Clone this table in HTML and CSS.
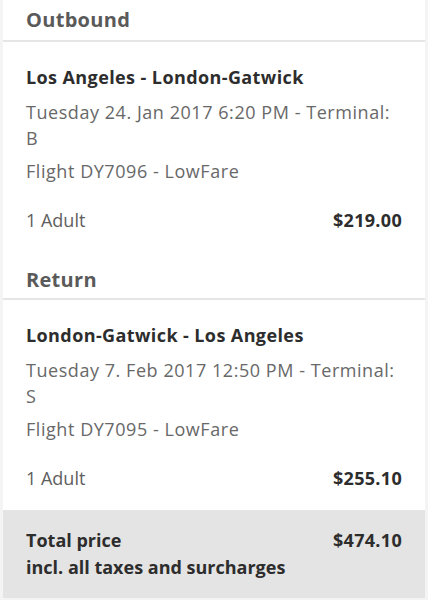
FILE: index.html
```html
<!DOCTYPE html>
<html lang="en">
<head>
<meta charset="utf-8">
<link rel="stylesheet" href="styles.css">
</head>
<body>
<div class="summary">
  <section class="leg">
    <h2 class="leg-title">Outbound</h2>
    <div class="leg-card">
      <div class="route">Los Angeles - London-Gatwick</div>
      <div class="info">Tuesday 24. Jan 2017 6:20 PM - Terminal: B</div>
      <div class="info">Flight DY7096 - LowFare</div>
      <div class="price-row">
        <span class="pax">1 Adult</span>
        <span class="amount">$219.00</span>
      </div>
    </div>
  </section>
  <section class="leg">
    <h2 class="leg-title leg-title--next">Return</h2>
    <div class="leg-card">
      <div class="route">London-Gatwick - Los Angeles</div>
      <div class="info">Tuesday 7. Feb 2017 12:50 PM - Terminal: S</div>
      <div class="info">Flight DY7095 - LowFare</div>
      <div class="price-row">
        <span class="pax">1 Adult</span>
        <span class="amount">$255.10</span>
      </div>
    </div>
  </section>
  <div class="total">
    <div class="total-label">
      <div>Total price</div>
      <div>incl. all taxes and surcharges</div>
    </div>
    <div class="total-amount">$474.10</div>
  </div>
</div>
</body>
</html>
```

FILE: styles.css
```css
html, body {
  margin: 0;
  padding: 0;
  background: #f4f4f4;
}
body {
  font-family: "Open Sans", Lato, sans-serif;
}
.summary {
  margin: 0 3px;
  background: #fff;
}
.leg-title {
  margin: 0;
  padding: 6px 23px 6px;
  font-size: 20px;
  line-height: 28px;
  font-weight: 700;
  letter-spacing: 0.3px;
  color: #5a5a5a;
  border-bottom: 2px solid #e6e6e6;
}
.leg-title--next {
  padding-top: 14px;
  padding-bottom: 4px;
}
.leg-card {
  padding: 22px 23px 19px;
}
.route {
  font-size: 18px;
  line-height: 26px;
  font-weight: 700;
  letter-spacing: 0.4px;
  color: #2d2d2d;
  margin-bottom: 9px;
}
.info {
  font-size: 18px;
  line-height: 26px;
  letter-spacing: 0.55px;
  color: #686868;
  margin-bottom: 7px;
}
.price-row {
  display: flex;
  justify-content: space-between;
  align-items: baseline;
  margin-top: 23px;
  font-size: 18px;
  line-height: 26px;
}
.pax {
  color: #5e5e5e;
}
.amount {
  font-weight: 700;
  letter-spacing: 0.3px;
  color: #2d2d2d;
}
.total {
  display: flex;
  justify-content: space-between;
  align-items: flex-start;
  background: #e4e4e4;
  padding: 17px 23px 17px;
  font-size: 18px;
  line-height: 27px;
  font-weight: 700;
  color: #2d2d2d;
}
.total-amount {
  letter-spacing: 0.3px;
}
```
